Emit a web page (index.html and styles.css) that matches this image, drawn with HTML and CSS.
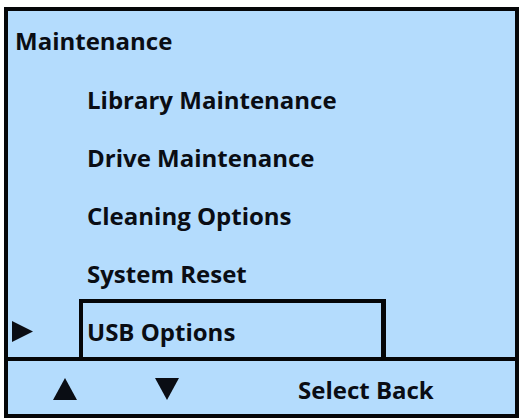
FILE: index.html
```
<!DOCTYPE html>
<html>
<head>
<meta charset="utf-8">
<link rel="stylesheet" href="styles.css">
</head>
<body>
<div class="screen">
  <div class="menu">
    <div class="title">Maintenance</div>
    <div class="item">Library Maintenance</div>
    <div class="item">Drive Maintenance</div>
    <div class="item">Cleaning Options</div>
    <div class="item item-short">System Reset</div>
    <div class="selected-row">
      <div class="cursor">
        <svg width="21" height="21" viewBox="0 0 21 21"><polygon points="0,0 21,10.5 0,21" fill="#0a0d14"/></svg>
      </div>
      <div class="selected">USB Options</div>
    </div>
  </div>
  <div class="footer">
    <svg class="up" width="24" height="22" viewBox="0 0 24 22"><polygon points="12,0 24,22 0,22" fill="#0a0d14"/></svg>
    <svg class="down" width="24" height="22" viewBox="0 0 24 22"><polygon points="0,0 24,0 12,22" fill="#0a0d14"/></svg>
    <div class="keys"><span>Select</span> <span>Back</span></div>
  </div>
</div>
</body>
</html>
```
FILE: styles.css
```
html, body {
  margin: 0;
  padding: 0;
  background: #ffffff;
}
body {
  font-family: "Open Sans", "DejaVu Sans", sans-serif;
  font-weight: 700;
  font-size: 24px;
  color: #0a0d14;
}
.screen {
  margin: 7px 0 0 4px;
  width: 515px;
  height: 411px;
  box-sizing: border-box;
  border: 4px solid #050608;
  border-top-width: 4px;
  background: #b4dcfd;
  display: flex;
  flex-direction: column;
}
.menu {
  height: 346px;
  display: flex;
  flex-direction: column;
  flex: none;
}
.title {
  padding: 1px 0 0 7px;
  height: 59px;
  line-height: 58px;
  flex: none;
}
.item {
  padding-left: 79px;
  height: 58px;
  line-height: 58px;
  flex: none;
}
.item-short {
  height: 54px;
}
.selected-row {
  display: flex;
  align-items: center;
  height: 58px;
  flex: none;
}
.cursor {
  width: 71px;
  padding-left: 4px;
  box-sizing: border-box;
  display: flex;
  align-items: center;
  margin-top: 6px;
}
.cursor svg {
  display: block;
}
.selected {
  align-self: stretch;
  width: 307px;
  box-sizing: border-box;
  border: 4px solid #050608;
  border-bottom: none;
  border-right-width: 5px;
  padding-left: 4px;
  line-height: 58px;
}
.footer {
  border-top: 4px solid #050608;
  flex: 1;
  display: flex;
  align-items: center;
}
.footer svg {
  display: block;
  flex: none;
}
.up {
  margin-left: 45px;
  margin-top: 1px;
}
.down {
  margin-left: 78px;
}
.keys {
  margin-left: 119px;
  line-height: 53px;
  padding-top: 2px;
}
```
